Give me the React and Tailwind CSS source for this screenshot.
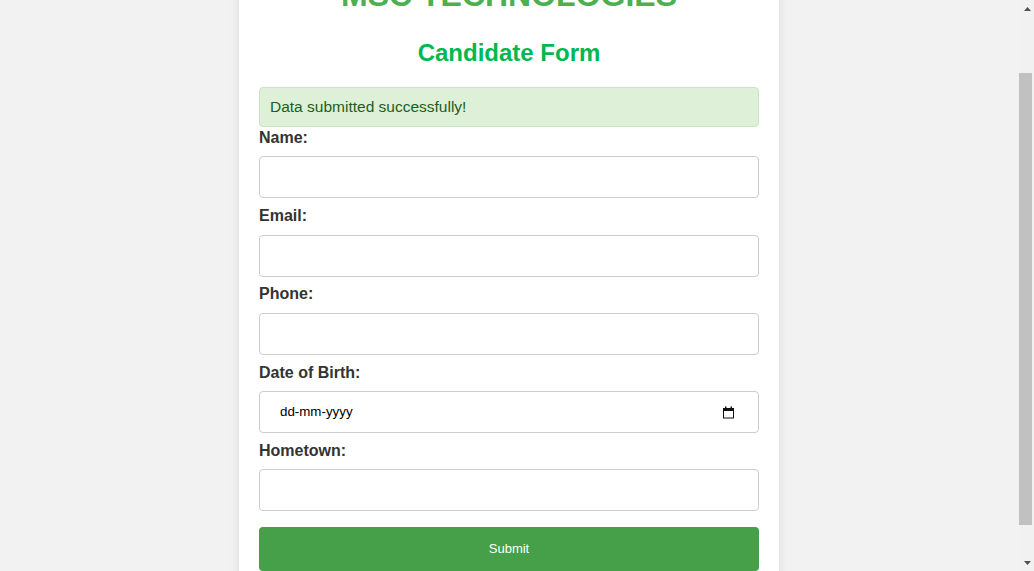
import React, { useLayoutEffect, useRef } from "react";

const fields = [
  { id: "name", label: "Name:", type: "text" },
  { id: "email", label: "Email:", type: "email" },
  { id: "phone", label: "Phone:", type: "tel" },
  { id: "dob", label: "Date of Birth:", type: "date" },
  { id: "hometown", label: "Hometown:", type: "text" },
];

function CalendarIcon() {
  return (
    <svg width="13" height="13" viewBox="0 0 13 13" className="shrink-0">
      <rect x="1.5" y="2.5" width="10" height="9.5" fill="none" stroke="#111" strokeWidth="1" />
      <rect x="1" y="2" width="11" height="3" fill="#111" />
      <rect x="3" y="0.5" width="1.5" height="2" fill="#111" />
      <rect x="8.5" y="0.5" width="1.5" height="2" fill="#111" />
    </svg>
  );
}

function DateField({ id }) {
  return (
    <div className="mt-[8.5px] mb-[6.75px] flex h-[42px] w-full items-center rounded-[4px] border border-[#ccc] bg-white pr-[23px] pl-[20px]">
      <input
        id={id}
        type="text"
        placeholder="dd-mm-yyyy"
        className="min-w-0 flex-1 bg-transparent text-[13.33px] text-black outline-none placeholder:text-black"
      />
      <CalendarIcon />
    </div>
  );
}

function FakeScrollbar() {
  return (
    <div className="flex w-[15px] shrink-0 flex-col bg-[#f1f1f1]">
      <div className="flex h-[17px] items-center justify-center pl-[1px]">
        <svg width="7" height="4" viewBox="0 0 7 4">
          <polygon points="3.5,0 7,4 0,4" fill="#505050" />
        </svg>
      </div>
      <div className="flex-1">
        <div className="mt-[56px] mr-[2px] h-[452px] bg-[#c1c1c1]" />
      </div>
      <div className="flex h-[17px] items-center justify-center pl-[1px]">
        <svg width="7" height="4" viewBox="0 0 7 4">
          <polygon points="0,0 7,0 3.5,4" fill="#505050" />
        </svg>
      </div>
    </div>
  );
}

export default function App() {
  const scrollRef = useRef(null);

  // page is shown scrolled a little, title half out of view
  useLayoutEffect(() => {
    if (scrollRef.current) scrollRef.current.scrollTop = 72;
  }, []);

  return (
    <div className="flex h-screen bg-[#f2f2f2] font-['Liberation_Sans',Arial,sans-serif]">
      <div ref={scrollRef} className="min-w-0 flex-1 overflow-hidden pr-[1px]">
        <div className="pt-[8px] pb-[16px]">
          <div className="mx-auto w-[540px] bg-white p-5 shadow-[0_0_10px_rgba(0,0,0,0.1)]">
            <h1 className="mt-[21.44px] mb-[24.5px] text-center text-[32px] font-bold leading-[normal] text-[#4caf50]">
              MSC TECHNOLOGIES
            </h1>
            <h2 className="mt-[24.5px] mb-[19.92px] text-center text-[24px] font-bold leading-[normal] text-[#00b84f]">
              Candidate Form
            </h2>

            <div className="rounded-[4px] border border-[#c8e5c0] bg-[#dff0d8] p-[10px] text-[15.5px] leading-[normal] text-[#1b5e20]">
              Data submitted successfully!
            </div>

            <form onSubmit={(e) => e.preventDefault()}>
              {fields.map((f) => (
                <div key={f.id}>
                  <label
                    htmlFor={f.id}
                    className="block text-[16px] font-bold leading-[21px] text-[#333]"
                  >
                    {f.label}
                  </label>
                  {f.type === "date" ? (
                    <DateField id={f.id} />
                  ) : (
                    <input
                      id={f.id}
                      type={f.type}
                      className="mt-[8.5px] mb-[6.75px] box-border block h-[42px] w-full rounded-[4px] border border-[#ccc] bg-white px-[10px] text-[13.33px] text-black outline-none"
                    />
                  )}
                </div>
              ))}
              <button
                type="submit"
                className="mt-[15.5px] block h-[44px] w-full rounded-[4px] bg-[#45a049] text-[13px] text-white"
              >
                Submit
              </button>
            </form>
          </div>
        </div>
      </div>
      <FakeScrollbar />
    </div>
  );
}
